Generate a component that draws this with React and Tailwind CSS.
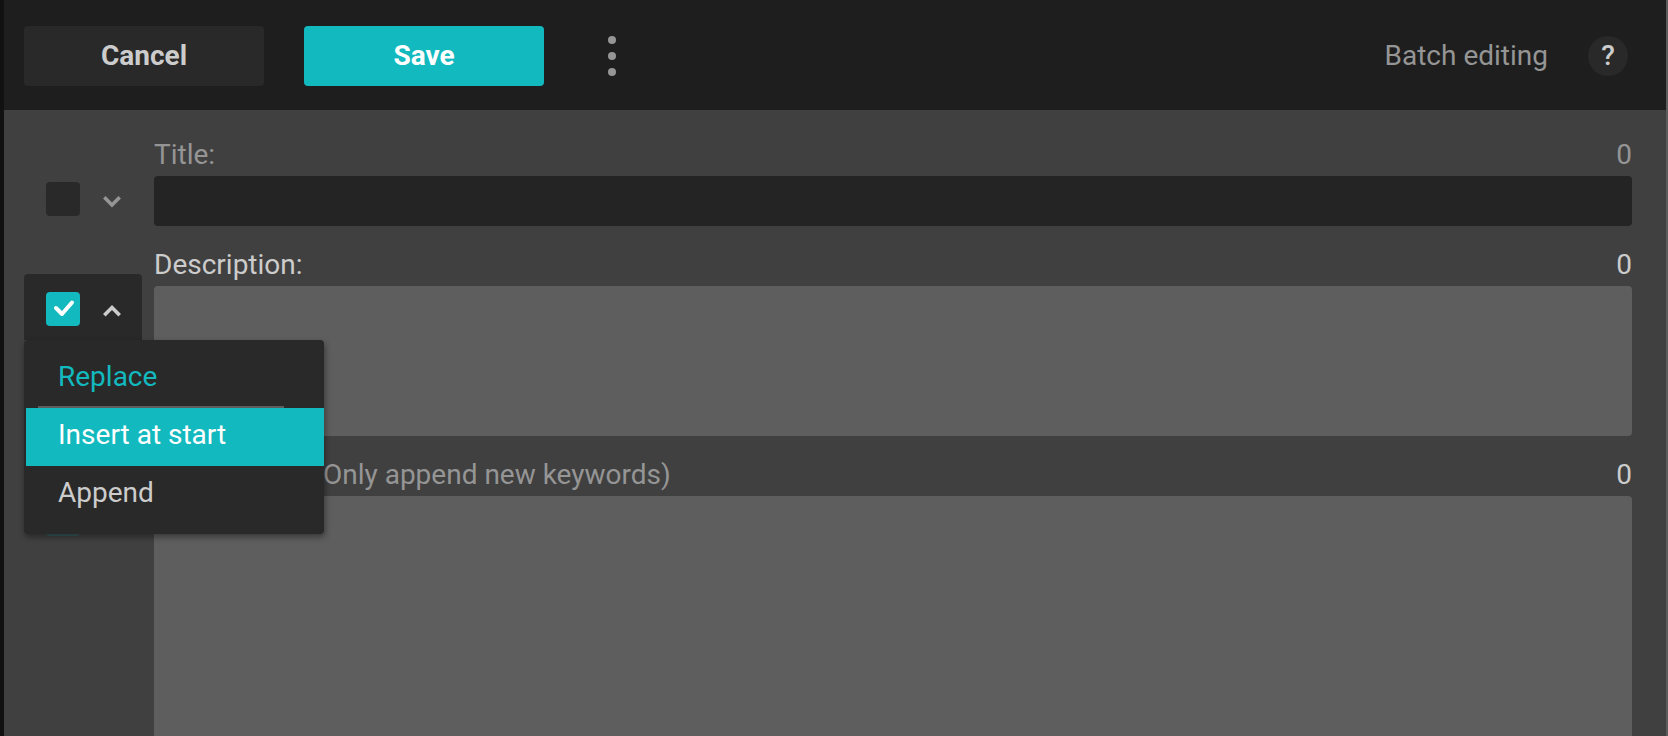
import { useState } from "react";

const MODES = ["Replace", "Insert at start", "Append"];

function Chevron({ up }) {
  return (
    <svg width="18" height="14" viewBox="0 0 18 14" fill="none" stroke="currentColor" strokeWidth="3.6" aria-hidden="true">
      <path d={up ? "M1.3 11.2 9 3.5 16.7 11.2" : "M1.3 3.3 9 11 16.7 3.3"} />
    </svg>
  );
}

function FieldToggle({ label, checked, onChange, open, onToggle, dimmed, children }) {
  return (
    <div
      className={`relative mt-8 ml-5 mr-3 flex w-[118px] shrink-0 items-start rounded-t pt-[18px] pl-[22px] ${
        open ? "z-10 h-[66px] bg-[#292929] text-[#cccccc]" : "h-[62px] text-[#959595]"
      } ${dimmed ? "opacity-20" : ""}`}
    >
      <span className="relative block size-[34px]">
        <input
          type="checkbox"
          aria-label={`Edit ${label}`}
          checked={checked}
          onChange={(e) => onChange(e.target.checked)}
          className="peer block size-[34px] appearance-none rounded bg-[#292929] checked:bg-[#12b9be]"
        />
        <svg
          viewBox="0 0 34 34"
          className="pointer-events-none absolute inset-0 hidden peer-checked:block"
          fill="none"
          stroke="#ffffff"
          strokeWidth="4"
          strokeLinecap="round"
          strokeLinejoin="round"
          aria-hidden="true"
        >
          <path d="M10 16 16 22 26 10.5" />
        </svg>
      </span>
      <button
        type="button"
        aria-label={`${label} edit mode`}
        aria-expanded={open}
        onClick={onToggle}
        className="flex h-[38px] w-16 shrink-0 items-center justify-center"
      >
        <Chevron up={open} />
      </button>
      {children}
    </div>
  );
}

function ModeMenu() {
  return (
    <ul className="absolute top-full left-0 w-[300px] rounded bg-[#292929] pt-2.5 pb-2.5 pl-0.5 shadow-[1px_3px_6px_rgba(0,0,0,0.4)]">
      {MODES.map((mode, i) => (
        <li key={mode}>
          <button
            type="button"
            className={`block w-full pl-8 text-left leading-[54px] ${
              i === 0 ? "pb-0.5 text-[#12b9be]" : i === 1 ? "bg-[#12b9be] pb-1 text-white" : "pb-1 text-[#cccccc]"
            }`}
          >
            {mode}
          </button>
          {i === 0 && <div className="mr-10 ml-3 h-0.5 bg-[#5e5e5e]" />}
        </li>
      ))}
    </ul>
  );
}

export default function App() {
  const [title, setTitle] = useState(false);
  const [description, setDescription] = useState(true);
  const [keywords, setKeywords] = useState(true);
  const [open, setOpen] = useState("description");
  const toggle = (name) => () => setOpen(open === name ? "" : name);

  return (
    <div className="flex h-screen flex-col overflow-hidden border-r-2 border-l-4 border-r-[#5c5c5c] border-l-[#111111] bg-[#404040] font-['Roboto',sans-serif] text-[28px] text-[#cccccc]">
      <header className="flex h-[110px] shrink-0 items-center bg-[#1e1e1e] pt-0.5 pr-[38px] pl-5">
        <button type="button" className="h-[60px] w-60 rounded bg-[#292929] font-bold">
          Cancel
        </button>
        <button type="button" className="ml-10 h-[60px] w-60 rounded bg-[#12b9be] font-bold text-white">
          Save
        </button>
        <button type="button" aria-label="More options" className="ml-12 flex w-10 justify-center text-[#959595]">
          <svg width="8" height="40" viewBox="0 0 8 40" fill="currentColor" aria-hidden="true">
            <circle cx="4" cy="4" r="4" />
            <circle cx="4" cy="20" r="4" />
            <circle cx="4" cy="36" r="4" />
          </svg>
        </button>
        <h1 className="ml-auto text-[#959595]">Batch editing</h1>
        <button
          type="button"
          aria-label="Help"
          className="ml-10 flex size-10 items-center justify-center rounded-full bg-[#292929] font-medium"
        >
          ?
        </button>
      </header>

      <main className="flex grow flex-col gap-4 pt-[22px] pr-[34px]">
        <section className="flex">
          <FieldToggle label="title" checked={title} onChange={setTitle} open={open === "title"} onToggle={toggle("title")}>
            {open === "title" && <ModeMenu />}
          </FieldToggle>
          <div className="grow">
            <div className="flex justify-between pt-0.5 leading-[42px] text-[#959595]">
              <label htmlFor="title">Title:</label>
              <span>0</span>
            </div>
            <input id="title" type="text" className="block h-[50px] w-full rounded bg-[#242424] px-3 outline-none" />
          </div>
        </section>

        <section className="flex">
          <FieldToggle
            label="description"
            checked={description}
            onChange={setDescription}
            open={open === "description"}
            onToggle={toggle("description")}
          >
            {open === "description" && <ModeMenu />}
          </FieldToggle>
          <div className="grow">
            <div className="flex justify-between pt-0.5 leading-[42px]">
              <label htmlFor="description">Description:</label>
              <span>0</span>
            </div>
            <textarea
              id="description"
              className="block h-[150px] w-full resize-none rounded bg-[#5e5e5e] px-3 py-2 outline-none"
            />
          </div>
        </section>

        <section className="flex grow">
          <FieldToggle
            label="keywords"
            checked={keywords}
            onChange={setKeywords}
            open={open === "keywords"}
            onToggle={toggle("keywords")}
            dimmed={open === "description"}
          >
            {open === "keywords" && <ModeMenu />}
          </FieldToggle>
          <div className="flex grow flex-col">
            <div className="flex justify-between pt-0.5 leading-[42px]">
              <label htmlFor="keywords">
                Keywords: <span className="ml-6 text-[#959595]">(Only append new keywords)</span>
              </label>
              <span>0</span>
            </div>
            <textarea
              id="keywords"
              className="block w-full grow resize-none rounded-t bg-[#5e5e5e] px-3 py-2 outline-none"
            />
          </div>
        </section>
      </main>
    </div>
  );
}
